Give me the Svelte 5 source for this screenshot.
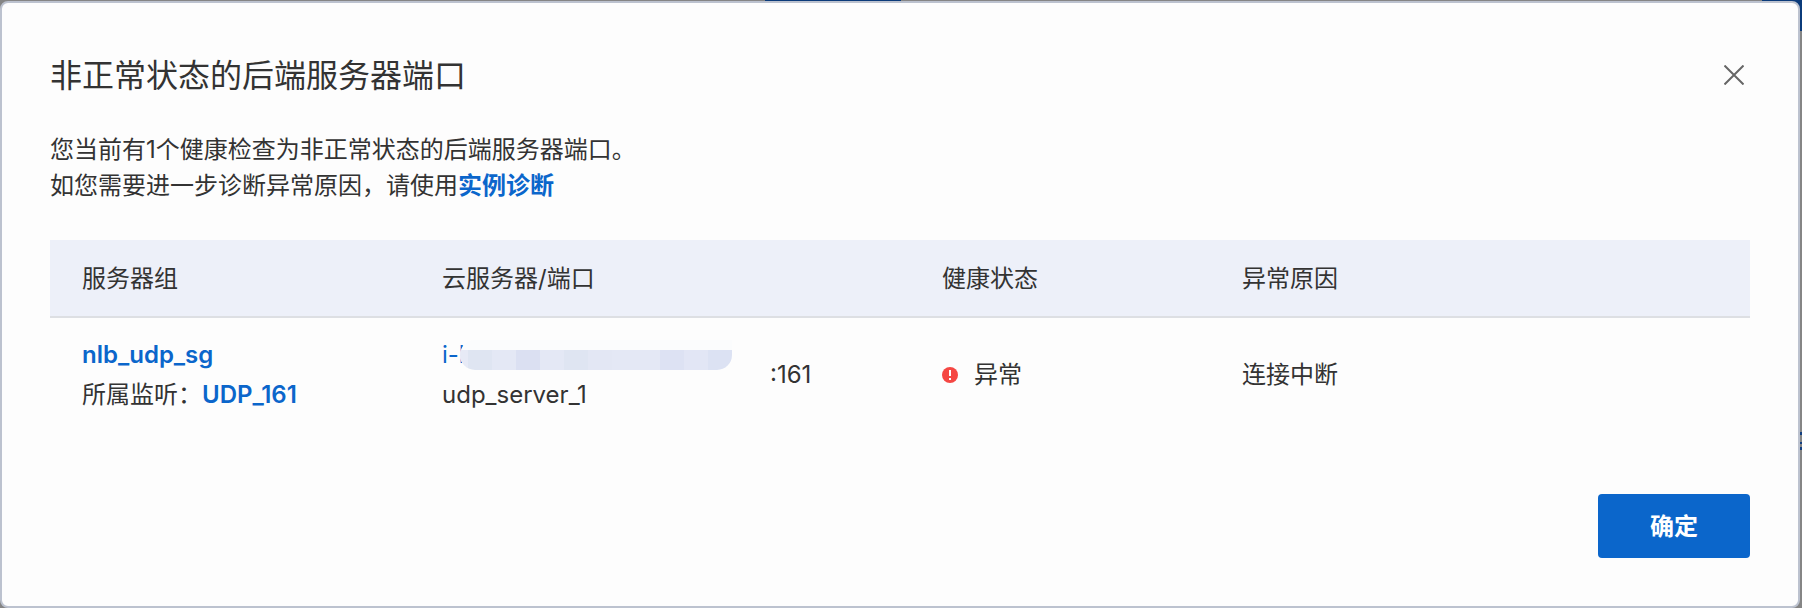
<script lang="ts">
  const rows = [
    {
      group: 'nlb_udp_sg',
      listener: 'UDP_161',
      id: 'i-b',
      server: 'udp_server_1',
      port: ':161',
      status: '异常',
      reason: '连接中断',
    },
  ];
  const mosaic = ['#e7eaf6', '#dfe5f2', '#e4e8f5', '#dbe0f2', '#e4e8f5', '#dfe5f2', '#e3e7f4', '#e4e8f5', '#e4e8f5', '#dde2f3', '#e2e6f5', '#dce2f3'];
  let open = $state(true);
</script>

<div class="backdrop">
  {#if open}
    <div class="dialog" role="dialog" aria-modal="true" aria-labelledby="dialog-title">
      <header>
        <h1 id="dialog-title">非正常状态的后端服务器端口</h1>
        <button class="close" type="button" aria-label="关闭" onclick={() => (open = false)}>
          <svg viewBox="0 0 20 20" width="20" height="20" aria-hidden="true">
            <path d="M0.5 0.5 19.5 19.5M19.5 0.5 0.5 19.5" fill="none" stroke="#666" stroke-width="2" />
          </svg>
        </button>
      </header>

      <div class="intro">
        <p>您当前有1个健康检查为非正常状态的后端服务器端口。</p>
        <p>如您需要进一步诊断异常原因，请使用<a href="#diagnose">实例诊断</a></p>
      </div>

      <table>
        <colgroup>
          <col class="c-group" />
          <col class="c-server" />
          <col class="c-status" />
          <col />
        </colgroup>
        <thead>
          <tr>
            <th scope="col">服务器组</th>
            <th scope="col">云服务器/端口</th>
            <th scope="col">健康状态</th>
            <th scope="col">异常原因</th>
          </tr>
        </thead>
        <tbody>
          {#each rows as row}
            <tr>
              <td>
                <div><a href="#group">{row.group}</a></div>
                <div>所属监听：<a href="#listener">{row.listener}</a></div>
              </td>
              <td>
                <div class="server">
                  <div class="names">
                    <div class="id">
                      <a class="plain" href="#instance">{row.id}</a>
                      <span class="mask" aria-hidden="true">
                        {#each mosaic as tone}
                          <i style:background={tone}></i>
                        {/each}
                      </span>
                    </div>
                    <div>{row.server}</div>
                  </div>
                  <span>{row.port}</span>
                </div>
              </td>
              <td>
                <div class="status">
                  <svg viewBox="0 0 16 16" width="16" height="16" aria-hidden="true">
                    <circle cx="8" cy="8" r="8" fill="#f54743" />
                    <path d="M7 3h2v6H7zM7 11h2v2H7z" fill="#fff" />
                  </svg>
                  <span>{row.status}</span>
                </div>
              </td>
              <td>{row.reason}</td>
            </tr>
          {/each}
        </tbody>
      </table>

      <footer>
        <button class="ok" type="button" onclick={() => (open = false)}>确定</button>
      </footer>
    </div>
  {/if}
</div>

<style>
  :global(body) {
    margin: 0;
  }

  .backdrop {
    box-sizing: border-box;
    min-height: 100vh;
    padding: 1px 2px 0 0;
    display: flex;
    background:
      linear-gradient(#0b3b7a, #0b3b7a) right 0 top 0 / 40px 31px no-repeat,
      linear-gradient(#0b3b7a, #0b3b7a) 765px 0 / 136px 1px no-repeat,
      linear-gradient(#123f80, #123f80) right 0 top 432px / 2px 3px no-repeat,
      linear-gradient(#123f80, #123f80) right 0 top 442px / 2px 2px no-repeat,
      linear-gradient(#123f80, #123f80) right 0 top 447px / 2px 3px no-repeat,
      #858585;
    color: #333;
    font-family: Inter, "Noto Sans CJK SC", sans-serif;
    font-size: 24px;
    line-height: 36px;
  }

  .dialog {
    box-sizing: border-box;
    flex: 1;
    min-width: 0;
    display: flex;
    flex-direction: column;
    padding: 49px 48px 48px;
    border: 2px solid #bcc2cf;
    border-radius: 8px;
    background: #fdfdfd;
  }

  header {
    display: flex;
    justify-content: space-between;
    align-items: center;
    margin-bottom: 32px;
  }

  h1 {
    margin: 0;
    font-size: 32px;
    font-weight: 400;
    line-height: 48px;
  }

  .close {
    display: flex;
    padding: 5px 6px 7px;
    border: 0;
    background: none;
    cursor: pointer;
  }

  .intro {
    margin-bottom: 36px;
  }

  p {
    margin: 0;
  }

  a {
    color: #0b66cb;
    font-weight: 600;
    text-decoration: none;
  }

  a.plain {
    font-weight: 400;
  }

  table {
    width: 100%;
    table-layout: fixed;
    border-collapse: separate;
    border-spacing: 0;
  }

  .c-group {
    width: 360px;
  }

  .c-server {
    width: 500px;
  }

  .c-status {
    width: 300px;
  }

  th {
    padding: 21px 32px 19px;
    border-bottom: 2px solid #dddfe3;
    background: #edf0f9;
    font-weight: 400;
    line-height: 36px;
    text-align: left;
  }

  td {
    padding: 17px 32px;
    line-height: 40px;
    vertical-align: middle;
  }

  .server {
    display: flex;
    align-items: center;
    gap: 38px;
  }

  .id {
    position: relative;
    width: 290px;
  }

  .mask {
    position: absolute;
    top: 5px;
    right: 0;
    box-sizing: border-box;
    display: flex;
    width: 272px;
    height: 30px;
    padding-top: 10px;
    overflow: hidden;
    border-radius: 15px 0 15px 15px;
    background: #fbfcfd;
  }

  .mask i {
    flex: 0 0 24px;
  }

  .mask i:first-child {
    flex: 0 0 8px;
  }

  .status {
    display: flex;
    align-items: center;
    gap: 16px;
  }

  footer {
    display: flex;
    justify-content: flex-end;
    margin-top: auto;
  }

  .ok {
    min-width: 152px;
    height: 64px;
    padding: 2px 24px 0;
    border: 0;
    border-radius: 4px;
    background: #0b66cb;
    color: #fff;
    font: inherit;
    font-weight: 600;
    cursor: pointer;
  }
</style>
